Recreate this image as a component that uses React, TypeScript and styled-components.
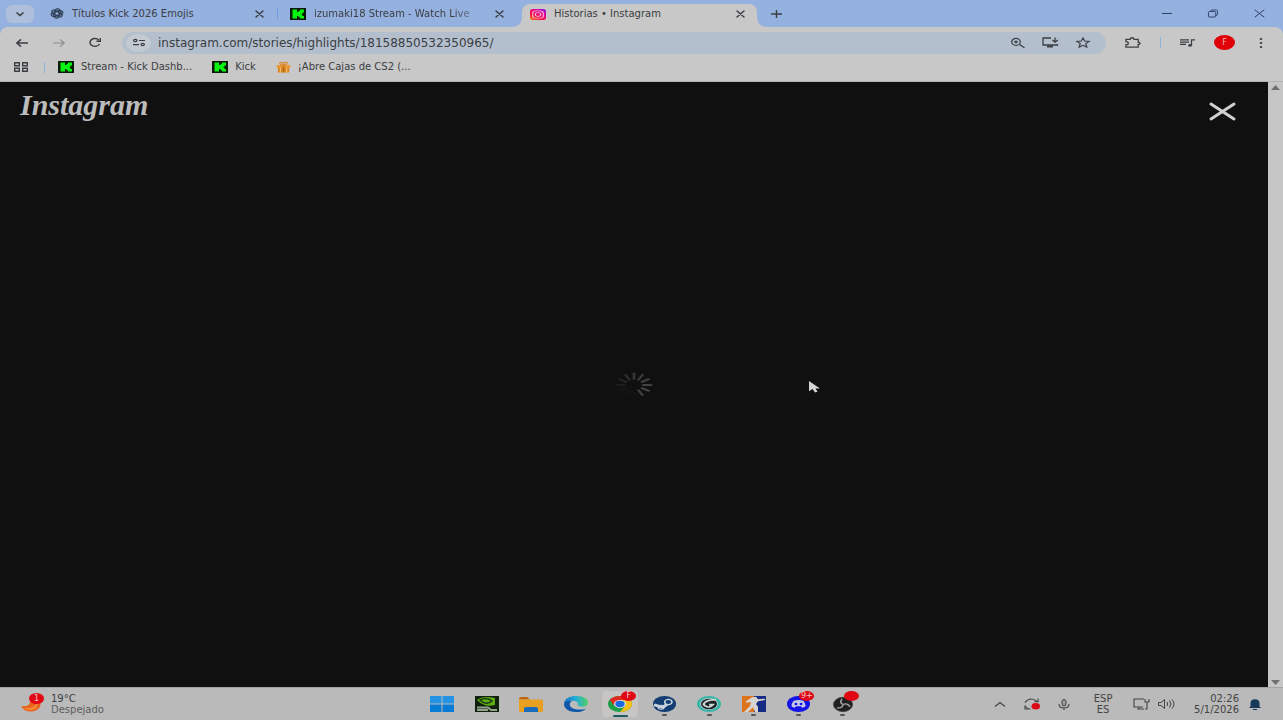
import React from "react";
import styled, { createGlobalStyle } from "styled-components";

const GlobalStyle = createGlobalStyle`
  * { box-sizing: border-box; }
  body { margin: 0; background: #101010; }
  button, input { font: inherit; color: inherit; border: 0; padding: 0; background: none; }
  h1, p { margin: 0; }
`;

const Desktop = styled.div`
  display: flex;
  flex-direction: column;
  min-height: 100vh;
  font-family: "DejaVu Sans", "Noto Sans", sans-serif;
  font-size: 10px;
  line-height: 14px;
  color: #3b3e42;
  background: #95b1df;
`;

/* ---------- icons ---------- */

const Svg = styled.svg`
  display: block;
  flex: none;
  overflow: visible;
`;

type GlyphProps = { w: number; h: number; box?: string; children: React.ReactNode };

const Glyph = ({ w, h, box = "0 0 24 24", children }: GlyphProps) => (
  <Svg width={w} height={h} viewBox={box} preserveAspectRatio="none" fill="none" stroke="currentColor" aria-hidden="true">
    {children}
  </Svg>
);

const Cross = ({ w = 7, h = 6, weight = 1.5 }: { w?: number; h?: number; weight?: number }) => (
  <Svg width={w} height={h} viewBox={`0 0 ${w} ${h}`} fill="none" stroke="currentColor" strokeWidth={weight} strokeLinecap="round" aria-hidden="true">
    <path d={`M0 0L${w} ${h}M${w} 0L0 ${h}`} />
  </Svg>
);

const KickIcon = () => (
  <Glyph w={16} h={12} box="0 0 16 12">
    <path d="M0 0h16v12H0z" fill="#0a1a08" stroke="none" />
    <path d="M2.500 1.500h4.500v2.500h1.500V2.700H10V1.500h4V4.500h-1.500v1.500h-1v.8h1v1.200H14v2.500h-4V9.300H8.500V8H7v2.500H2.500z" fill="#05f410" stroke="none" />
  </Glyph>
);

const KnotIcon = () => (
  <Glyph w={14} h={11}>
    <g strokeWidth="2" stroke="#2c3c52">
      {[0, 60, 120, 180, 240, 300].map((a) => (
        <path key={a} transform={`rotate(${a} 12 12)`} d="M8.500 13V5.500a4.500 4.500 0 0 1 8.500-1.500M8.500 8.500l6-3.500 5 3" />
      ))}
    </g>
  </Glyph>
);

const InstagramIcon = () => (
  <Glyph w={16} h={11}>
    <defs>
      <linearGradient id="insta" x1="0" y1="1" x2="0.800" y2="0">
        <stop offset="0" stopColor="#f58a16" />
        <stop offset="0.350" stopColor="#f5103c" />
        <stop offset="0.700" stopColor="#ec0690" />
        <stop offset="1" stopColor="#9a10d8" />
      </linearGradient>
    </defs>
    <rect width="24" height="24" rx="5" fill="url(#insta)" stroke="none" />
    <g stroke="#f6b5d0" strokeWidth="1.800">
      <rect x="4" y="4" width="16" height="16" rx="5" />
      <circle cx="12" cy="12" r="4" />
      <path d="M16.500 7.500h.6" />
    </g>
  </Glyph>
);

const GiftIcon = () => (
  <Glyph w={15} h={12}>
    <g stroke="none">
      <path d="M3 11h18v12H3z" fill="#d8841c" />
      <path d="M1 8h22v5H1z" fill="#e89b35" />
      <path d="M11 8h2v15h-2z" fill="#b86a18" />
      <path d="M6 13h2v10H6zM16 13h2v10h-2z" fill="#f0bc70" />
    </g>
    <path d="M12 8C8 8 4 5 7 3s5 1 5 5c0-4 2-7 5-5s-1 5-5 5z" stroke="#d8882c" strokeWidth="2" />
  </Glyph>
);

/* ---------- tab strip ---------- */

const TabStrip = styled.div`
  display: flex;
  align-items: center;
  height: 27px;
  padding-left: 6px;
`;

const TabSearch = styled.button`
  display: grid;
  place-items: center;
  width: 28px;
  height: 18px;
  margin-right: 8px;
  border-radius: 6px;
  background: #aebfdc;
`;

const Tabs = styled.div`
  display: flex;
  align-self: stretch;
`;

const Tab = styled.div<{ $active?: boolean; $divider?: boolean }>`
  position: relative;
  display: flex;
  align-items: center;
  gap: 8px;
  width: ${(p) => (p.$active ? 235 : 240)}px;
  height: ${(p) => (p.$active ? 23 : 27)}px;
  align-self: flex-end;
  padding: ${(p) => (p.$active ? "0 11px 3px 8px" : "0 17px 0 8px")};
  border-radius: 8px 8px 0 0;
  background: ${(p) => (p.$active ? "#c8c8c8" : "transparent")};
  ${(p) =>
    p.$active &&
    `&::before, &::after {
      content: "";
      position: absolute;
      bottom: 0;
      width: 8px;
      height: 8px;
    }
    &::before { right: 100%; background: radial-gradient(circle at 0 0, transparent 7px, #c8c8c8 8px); }
    &::after { left: 100%; background: radial-gradient(circle at 100% 0, transparent 7px, #c8c8c8 8px); }`}
  ${(p) =>
    p.$divider &&
    `&::after {
      content: "";
      position: absolute;
      right: 4px;
      top: 8px;
      width: 1px;
      height: 11px;
      background: #6f9be0;
    }`}
`;

const TabTitle = styled.button`
  display: flex;
  align-items: center;
  gap: 8px;
  flex: 1;
  min-width: 0;
  text-align: left;
  white-space: nowrap;
`;

const TabText = styled.span<{ $fade?: boolean }>`
  ${(p) => p.$fade && "mask-image: linear-gradient(to right, #000 88%, rgba(0, 0, 0, 0.5));"}
`;

const IconButton = styled.button<{ $w?: number }>`
  display: grid;
  place-items: center;
  flex: none;
  width: ${(p) => p.$w ?? 12}px;
  height: 20px;
`;

const WindowControls = styled.div`
  display: flex;
  margin-left: auto;
  color: #2c4068;
`;

/* ---------- toolbar ---------- */

const Toolbar = styled.div`
  display: flex;
  align-items: center;
  height: 31px;
  padding: 0 4px;
  border-radius: 8px 8px 0 0;
  background: #c8c8c8;
`;

const AddressBar = styled.form`
  display: flex;
  align-items: center;
  flex: 1;
  height: 22px;
  margin-left: 9px;
  padding: 0 7px 0 4px;
  border-radius: 11px;
  background: #b4bfce;
`;

const SiteInfo = styled.button`
  display: grid;
  place-items: center;
  width: 25px;
  height: 18px;
  border-radius: 50%;
  background: #c3cad2;
`;

const AddressInput = styled.input`
  flex: 1;
  min-width: 0;
  margin-left: 7px;
  font-size: 12px;
  outline: none;
`;

const ToolbarDivider = styled.span`
  width: 1px;
  height: 11px;
  background: #8fb4d8;
`;

const BookmarksDivider = styled(ToolbarDivider)`
  margin: 0 13px 0 16px;
`;

const Avatar = styled.button`
  width: 21px;
  height: 15px;
  margin-right: 8px;
  border-radius: 50%;
  background: #e00008;
  color: #f0b0b0;
  font-size: 8px;
  line-height: 15px;
`;

const Bookmarks = styled.nav`
  display: flex;
  align-items: center;
  height: 24px;
  padding: 0 13px 5px;
  background: #c8c8c8;
  border-bottom: 1px solid #b4b4b4;
`;

const Bookmark = styled.a`
  display: flex;
  align-items: center;
  gap: 7px;
  margin-right: 20px;
  color: inherit;
  text-decoration: none;
  white-space: nowrap;
`;

/* ---------- page ---------- */

const Viewport = styled.div`
  display: flex;
  flex: 1;
  background: #101010;
`;

const Story = styled.main`
  position: relative;
  display: flex;
  flex-direction: column;
  flex: 1;
`;

const StoryHeader = styled.header`
  display: flex;
  justify-content: space-between;
  height: 60px;
  padding: 8px 32px 0 20px;
  color: #d0d0d0;
`;

const Wordmark = styled.h1`
  font: italic bold 30px/30px "Liberation Serif", serif;
  color: #bcbcbc;
`;

const CloseStory = styled.button`
  display: grid;
  place-items: center;
  width: 28px;
  height: 42px;
`;

const Loading = styled.div`
  display: grid;
  place-items: center;
  flex: 1;
  padding-bottom: 60px;
`;

const Pointer = styled.div`
  position: absolute;
  left: calc(50% + 175px);
  top: calc(50% - 4px);
`;

const Scrollbar = styled.div`
  display: flex;
  flex-direction: column;
  justify-content: space-between;
  align-items: center;
  width: 15px;
  padding: 3px 0 2px;
  background: #c6c6c6;
  color: #707070;
`;

/* ---------- taskbar ---------- */

const Taskbar = styled.footer`
  display: grid;
  grid-template-columns: 1fr 437px 1fr;
  align-items: center;
  height: 33px;
  padding-left: 2px;
  background: #bababa;
  border-top: 1px solid #a4a4a4;
  line-height: 11px;
`;

const Weather = styled.button`
  display: flex;
  gap: 5px;
  padding-left: 19px;
  text-align: left;
`;

const Muted = styled.span`
  display: block;
  color: #5e5e5e;
`;

const Apps = styled.div`
  display: flex;
  justify-content: space-between;
`;

const AppButton = styled.button<{ $state?: "open" | "active" }>`
  position: relative;
  display: grid;
  place-items: center;
  width: 36px;
  height: 26px;
  border-radius: 4px;
  background: ${(p) => (p.$state === "active" ? "#c6c5c4" : "transparent")};
  &::after {
    content: "";
    position: absolute;
    bottom: ${(p) => (p.$state === "active" ? 0 : 1)}px;
    width: ${(p) => (p.$state === "active" ? 15 : 5)}px;
    height: 2px;
    border-radius: 1px;
    background: ${(p) => (p.$state === "active" ? "#1c5a60" : p.$state ? "#555" : "transparent")};
  }
`;

const Badge = styled.span<{ $h?: number }>`
  position: absolute;
  top: 0;
  right: 2px;
  min-width: 15px;
  height: ${(p) => p.$h ?? 10}px;
  border-radius: 50%;
  background: #e00613;
  color: #f2c8c8;
  font-size: 8px;
  line-height: ${(p) => p.$h ?? 10}px;
  text-align: center;
`;

const WeatherIcon = styled.span`
  position: relative;
  width: 25px;
  height: 22px;
`;

const Tray = styled.div`
  display: flex;
  align-items: center;
  justify-content: flex-end;
  padding-right: 22px;
  color: #444;
`;

const TrayButton = styled(IconButton)`
  margin-right: 8px;
`;

const Language = styled.button`
  width: 30px;
  margin: 0 13px 0 4px;
  text-align: center;
`;

const Clock = styled.button`
  margin: 0 10px 0 13px;
  text-align: right;
`;

const Spinner = () => (
  <Glyph w={38} h={26} box="-50 -50 100 100">
    {[0.18, 0.2, 0.22, 0.24, 0.24, 0.22, 0.01, 0.02, 0.03, 0.06, 0.1, 0.14].map((shade, i) => (
      <path key={i} transform={`rotate(${i * 30})`} d="M0-24V-45" strokeWidth="7" strokeLinecap="round" stroke={`rgba(230,230,230,${shade})`} />
    ))}
  </Glyph>
);

export default function App() {
  return (
    <Desktop>
      <GlobalStyle />
      <TabStrip>
        <TabSearch aria-label="Buscar pestañas">
          <Glyph w={8} h={4} box="0 0 8 4"><path d="M.5.500 4 3.500 7.500.5" strokeWidth="1.600" /></Glyph>
        </TabSearch>
        <Tabs>
          <Tab $divider>
            <TabTitle><KnotIcon /><TabText>Títulos Kick 2026 Emojis</TabText></TabTitle>
            <IconButton aria-label="Cerrar"><Cross /></IconButton>
          </Tab>
          <Tab>
            <TabTitle><KickIcon /><TabText $fade>izumaki18 Stream - Watch Live</TabText></TabTitle>
            <IconButton aria-label="Cerrar"><Cross /></IconButton>
          </Tab>
          <Tab $active>
            <TabTitle><InstagramIcon /><TabText>Historias • Instagram</TabText></TabTitle>
            <IconButton aria-label="Cerrar"><Cross /></IconButton>
          </Tab>
        </Tabs>
        <IconButton $w={38} aria-label="Nueva pestaña">
          <Glyph w={11} h={8} box="0 0 11 8"><path d="M0 4h11M5.500 0v8" strokeWidth="1.400" /></Glyph>
        </IconButton>
        <WindowControls>
          <IconButton $w={47} aria-label="Minimizar"><Glyph w={10} h={2} box="0 0 10 2"><path d="M0 .5h10" /></Glyph></IconButton>
          <IconButton $w={46} aria-label="Restaurar">
            <Glyph w={10} h={7} box="0 0 11 7"><rect x=".5" y="1.500" width="8" height="5.500" rx="1" /><path d="M3 1.500Q3 0 4.500 0H9q1.500 0 1.500 1.500v3Q10.500 5.500 8.500 5.500" /></Glyph>
          </IconButton>
          <IconButton $w={47} aria-label="Cerrar ventana"><Cross w={9} h={7} weight={1} /></IconButton>
        </WindowControls>
      </TabStrip>

      <Toolbar>
        <IconButton $w={36} aria-label="Atrás"><Glyph w={12} h={8} box="0 0 12 8"><path d="M12 4H1M5 .4.800 4 5 7.600" strokeWidth="1.400" /></Glyph></IconButton>
        <IconButton $w={37} aria-label="Adelante"><Glyph w={12} h={8} box="0 0 12 8"><path d="M0 4h11M7 .4 11.200 4 7 7.600" strokeWidth="1.200" stroke="#8c8c8c" /></Glyph></IconButton>
        <IconButton $w={36} aria-label="Recargar"><Glyph w={12} h={9} box="0 0 12 9"><path d="M10.500 6A5 3.900 0 1 1 9.800 2M11.300 0v3.300H7.500" strokeWidth="1.400" /></Glyph></IconButton>
        <AddressBar onSubmit={(e) => e.preventDefault()}>
          <SiteInfo type="button" aria-label="Información del sitio">
            <Glyph w={12} h={7} box="0 0 13 8"><path d="M6.500 1.700H13M0 6.300h6.500" strokeWidth="1.400" /><ellipse cx="2.500" cy="1.700" rx="1.800" ry="1.300" strokeWidth="1.400" /><ellipse cx="10.500" cy="6.300" rx="1.800" ry="1.300" strokeWidth="1.400" /></Glyph>
          </SiteInfo>
          <AddressInput aria-label="Dirección" defaultValue="instagram.com/stories/highlights/18158850532350965/" />
          <IconButton $w={33} type="button" aria-label="Zoom">
            <Glyph w={14} h={10} box="0 0 14 10"><ellipse cx="5" cy="3.900" rx="4.300" ry="3.500" strokeWidth="1.200" /><path d="M8.200 6.200 13.500 9.800M3 3.900h4M5 2.400v3" strokeWidth="1.300" /></Glyph>
          </IconButton>
          <IconButton $w={33} type="button" aria-label="Instalar">
            <Glyph w={17} h={11} box="0 0 17 11"><path d="M9 1H1v7h14.500V7M13 .5v4.500M10.500 3 13 5.200 15.800 3" strokeWidth="1.300" /><path d="M5 9.500h6" strokeWidth="2" /></Glyph>
          </IconButton>
          <IconButton $w={32} type="button" aria-label="Favorito">
            <Glyph w={14} h={11}><path d="m12 2 3 7 7.500.6-5.700 5 1.700 7.400L12 18l-6.500 4 1.700-7.400-5.700-5L9 9z" strokeWidth="2.200" /></Glyph>
          </IconButton>
        </AddressBar>
        <IconButton $w={54} aria-label="Extensiones">
          <Glyph w={16} h={11} box="0 0 17 12"><path d="M1 2.500h4.500Q5.500.8 7.500.8t2 1.700H14v3q2 0 2 1.300t-2 1.200V11H1V8.500q2.500 0 2.500-1.700T1 5z" strokeWidth="1.400" /></Glyph>
        </IconButton>
        <ToolbarDivider />
        <IconButton $w={53} aria-label="Multimedia">
          <Glyph w={15} h={8} box="0 0 15 9"><path d="M0 1h9M0 3.500h9M0 6h6M11.500 7V1H15" strokeWidth="1.300" /><ellipse cx="10" cy="7.200" rx="1.800" ry="1.500" fill="currentColor" stroke="none" /></Glyph>
        </IconButton>
        <Avatar aria-label="Perfil">F</Avatar>
        <IconButton $w={36} aria-label="Menú">
          <Glyph w={4} h={10} box="0 0 4 10"><g fill="currentColor" stroke="none"><ellipse cx="2" cy="1" rx="1.300" ry="1" /><ellipse cx="2" cy="5" rx="1.300" ry="1" /><ellipse cx="2" cy="9" rx="1.300" ry="1" /></g></Glyph>
        </IconButton>
      </Toolbar>

      <Bookmarks aria-label="Marcadores">
        <IconButton $w={15} aria-label="Aplicaciones">
          <Glyph w={14} h={10} box="0 0 14 10"><path d="M.7.700h4.600v3H.7zM8.700.700h4.600v3H8.700zM.7 6.300h4.600v3H.7zM8.700 6.300h4.600v3H8.700z" strokeWidth="1.400" /></Glyph>
        </IconButton>
        <BookmarksDivider />
        <Bookmark href="#dashboard"><KickIcon />Stream - Kick Dashb...</Bookmark>
        <Bookmark href="#kick"><KickIcon />Kick</Bookmark>
        <Bookmark href="#cajas"><GiftIcon />¡Abre Cajas de CS2 (...</Bookmark>
      </Bookmarks>

      <Viewport>
        <Story>
          <StoryHeader>
            <Wordmark>Instagram</Wordmark>
            <CloseStory aria-label="Cerrar"><Cross w={23} h={15} weight={3} /></CloseStory>
          </StoryHeader>
          <Loading role="status" aria-label="Cargando"><Spinner /></Loading>
          <Pointer>
            <Glyph w={11} h={13} box="0 0 11 14"><path d="M0 0v11l3.500-2.500 2.500 4 2.500-1L6.500 8H11z" fill="#d4d4d4" stroke="none" /></Glyph>
          </Pointer>
        </Story>
        <Scrollbar aria-hidden="true">
          <Glyph w={9} h={5} box="0 0 9 5"><path d="M4.500 0 9 5H0z" fill="currentColor" stroke="none" /></Glyph>
          <Glyph w={9} h={5} box="0 0 9 5"><path d="M4.500 5 9 0H0z" fill="currentColor" stroke="none" /></Glyph>
        </Scrollbar>
      </Viewport>

      <Taskbar>
        <Weather>
          <WeatherIcon>
            <Glyph w={22} h={19} box="0 0 22 19"><path d="M0 13q8 2 11-7l8-1q3 12-8 13.500Q3 19 0 13z" fill="#e8641c" stroke="none" /><path d="M3 15q10 1 14-6 0 8-7 8-5 0-7-2z" fill="#f58a35" stroke="none" /></Glyph>
            <Badge $h={11}>1</Badge>
          </WeatherIcon>
          <span>19°C<Muted>Despejado</Muted></span>
        </Weather>
        <Apps>
          <AppButton aria-label="Inicio">
            <Glyph w={24} h={16} box="0 0 24 16"><path d="M0 0h11.500v7.500H0zM12.500 0H24v7.500H12.500z" fill="#2493e4" stroke="none" /><path d="M0 8.500h11.500V16H0zM12.500 8.500H24V16H12.500z" fill="#087bd4" stroke="none" /></Glyph>
          </AppButton>
          <AppButton aria-label="NVIDIA">
            <Glyph w={24} h={16} box="0 0 24 16"><path d="M0 0h24v16H0z" fill="#122010" stroke="none" /><path d="M2 4Q8-1 20 2v7Q10 12 2 4z" fill="#5cae12" stroke="none" /><path d="M5 4q7-3 12 1-6 5-12-1z" stroke="#173010" strokeWidth="1.300" /><path d="M2 11.500h11l3 2.500h6M2 14h11" stroke="#94a48f" strokeWidth="1.800" /></Glyph>
          </AppButton>
          <AppButton aria-label="Explorador">
            <Glyph w={24} h={15} box="0 0 24 15"><path d="M0 2Q0 0 2 0h6l3 2.500H0z" fill="#bd6410" stroke="none" /><path d="M0 2.500h23l1 1V14l-1 1H1l-1-1z" fill="#e8a020" stroke="none" /><path d="M5 15v-3.500Q5 10 7 10h10q2 0 2 1.500V15z" fill="#176dbc" stroke="none" /></Glyph>
          </AppButton>
          <AppButton aria-label="Edge">
            <Glyph w={24} h={16}>
              <defs><linearGradient id="edge"><stop stopColor="#1272c8" /><stop offset=".5" stopColor="#24afd6" /><stop offset="1" stopColor="#50cf62" /></linearGradient></defs>
              <g stroke="none"><path d="M0 12C0 4 6 0 12 0c8 0 12 5 12 10 0 4-3 6-6 6-4 0-5-2-4-4 0-3-2-5-6-5-4 0-7 2-8 5z" fill="url(#edge)" /><path d="M0 12c1-4 4-5 8-5-3 3-3 8 0 11 4 3 9 3 14 1-3 4-6 5-10 5C5 24 0 19 0 12z" fill="#0d56aa" /></g>
            </Glyph>
          </AppButton>
          <AppButton $state="active" aria-label="Chrome">
            <Glyph w={24} h={16}>
              <g stroke="none"><circle cx="12" cy="12" r="12" fill="#1ea04a" /><path d="M1.600 6A12 12 0 0 1 22.400 6H12L6.800 15z" fill="#e02a22" /><path d="M12 6h10.400A12 12 0 0 1 12 24l5.200-9z" fill="#f4bf18" /><circle cx="12" cy="12" r="6" fill="#e4e4e4" /><circle cx="12" cy="12" r="4.700" fill="#1c6ae0" /></g>
            </Glyph>
            <Badge>F</Badge>
          </AppButton>
          <AppButton $state="open" aria-label="Steam">
            <Glyph w={23} h={16}><circle cx="12" cy="12" r="12" fill="#123d72" stroke="none" /><path d="M1 13l9 4 6-6" stroke="#c8d2dc" strokeWidth="4" /><circle cx="16" cy="9" r="3.800" fill="#123d72" stroke="#c8d2dc" strokeWidth="1.800" /><circle cx="8.500" cy="17" r="3" stroke="#c8d2dc" strokeWidth="1.500" /></Glyph>
          </AppButton>
          <AppButton $state="open" aria-label="G HUB">
            <Glyph w={24} h={16}><circle cx="12" cy="12" r="10.500" fill="#c2cac8" stroke="#38b5a8" strokeWidth="3" /><circle cx="12" cy="12" r="8" fill="#182327" stroke="none" /><path d="M19 5.500Q12 5.500 8.500 9t0 6q4 4 7.500-2h-4" stroke="#d0d8d6" strokeWidth="2.400" /></Glyph>
          </AppButton>
          <AppButton $state="open" aria-label="Counter-Strike 2">
            <Glyph w={24} h={16}><path d="M0 0h13v24H0z" fill="#dc741c" stroke="none" /><path d="M12 0h12v24H12z" fill="#152a82" stroke="none" /><path d="M10 2l4-1 2 4 7-1v2l-7 2-2 4 2 4v8h-3l-2-7-5 7H2l6-9 1-6-5 1V8z" fill="#d8d5d0" stroke="none" /></Glyph>
          </AppButton>
          <AppButton $state="open" aria-label="Discord">
            <Glyph w={23} h={16}><circle cx="12" cy="12" r="12" fill="#1414e4" stroke="none" /><path d="M7 7q5-2 10 0 3 5 2 9l-3 1.500-1.500-2h-5L8 17.500 5 16q-1-4 2-9z" fill="#c4c8e8" stroke="none" /><ellipse cx="9.300" cy="12" rx="1.500" ry="1.800" fill="#1414e4" stroke="none" /><ellipse cx="14.700" cy="12" rx="1.500" ry="1.800" fill="#1414e4" stroke="none" /></Glyph>
            <Badge>9+</Badge>
          </AppButton>
          <AppButton $state="open" aria-label="OBS">
            <Glyph w={20} h={15}><circle cx="12" cy="12" r="11.500" fill="#202022" stroke="#3c3c3c" />{[0, 120, 240].map((a) => <path key={a} transform={`rotate(${a} 12 12)`} d="M12 12q-5-3-1-9" stroke="#a2a2a2" strokeWidth="2" />)}</Glyph>
            <Badge />
          </AppButton>
        </Apps>
        <Tray>
          <TrayButton $w={24} aria-label="Iconos ocultos"><Glyph w={10} h={5} box="0 0 10 5"><path d="M0 4.500 5 .5l5 4" strokeWidth="1.200" /></Glyph></TrayButton>
          <TrayButton $w={24} aria-label="Actualizaciones">
            <Glyph w={16} h={12} box="0 0 17 13"><path d="M1 5Q5 0 10 1.500L15 4M15 .5V4h-4M1 8v4h4M1 8q2 4 6 4" strokeWidth="1.100" /><ellipse cx="12.500" cy="9" rx="4.500" ry="3.500" fill="#de0918" stroke="none" /></Glyph>
          </TrayButton>
          <TrayButton $w={24} aria-label="Micrófono"><Glyph w={12} h={11} box="0 0 12 11"><rect x="4" y=".5" width="4" height="6.500" rx="2" fill="#999" /><path d="M1 5q0 4 5 4t5-4M6 9v2" strokeWidth="1.100" /></Glyph></TrayButton>
          <Language>ESP<br />ES</Language>
          <IconButton $w={20} aria-label="Red"><Glyph w={17} h={12} box="0 0 17 12"><path d="M11 1H1v8h9M4 11h7M6 9v2M12 1v3h4V1M14 4v7h-2" strokeWidth="1.100" /></Glyph></IconButton>
          <IconButton $w={30} aria-label="Volumen"><Glyph w={17} h={10} box="0 0 17 10"><path d="M.5 3.500h2.500L6.500.5v9L3 6.500H.5zM9 3q1.500 2 0 4M11.500 1.500q3 3.500 0 7M14 .5q4 4.500 0 9" strokeWidth="1" /></Glyph></IconButton>
          <Clock>02:26<br />5/1/2026</Clock>
          <Glyph w={12} h={11} box="0 0 12 11"><path d="M1.500 7.500V4.500Q1.500.3 6 .3t4.500 4.200v3L12 9H0zM4 10h4v1H4z" fill="#173a58" stroke="none" /></Glyph>
        </Tray>
      </Taskbar>
    </Desktop>
  );
}
